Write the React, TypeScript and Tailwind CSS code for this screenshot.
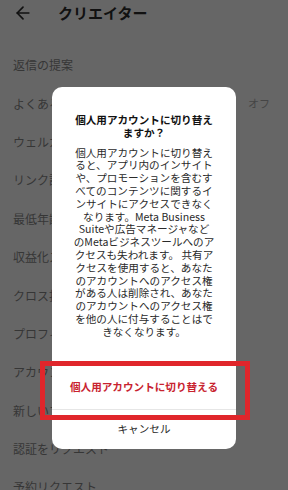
import { ArrowLeft } from "lucide-react";

const menuItems = [
  { label: "返信の提案" },
  { label: "よくある質問", value: "オフ" },
  { label: "ウェルカムメッセージ" },
  { label: "リンク設定" },
  { label: "最低年齢" },
  { label: "収益化ステータス" },
  { label: "クロス投稿" },
  { label: "プロフィールの表示" },
  { label: "アカウントタイプを切り替える" },
  { label: "新しいプロアカウントを追加" },
  { label: "認証をリクエスト" },
  { label: "予約リクエスト" },
];

const bodyLines = [
  "個人用アカウントに切り替え",
  "ると、アプリ内のインサイト",
  "や、プロモーションを含むす",
  "べてのコンテンツに関するイ",
  "ンサイトにアクセスできなく",
  "なります。Meta Business",
  "Suiteや広告マネージャなど",
  "のMetaビジネスツールへのア",
  "クセスも失われます。 共有ア",
  "クセスを使用すると、あなた",
  "のアカウントへのアクセス権",
  "がある人は削除され、あなた",
  "のアカウントへのアクセス権",
  "を他の人に付与することはで",
  "きなくなります。",
];

export default function App() {
  return (
    <div
      className="relative h-[490px] w-full overflow-hidden bg-[#666666]"
      style={{ fontFamily: '"Noto Sans CJK JP", "Noto Sans", sans-serif' }}
    >
      {/* Header */}
      <div className="flex h-[25px] items-center pl-[13px]">
        <ArrowLeft className="h-[20px] w-[20px] text-[#111]" strokeWidth={2} />
        <span className="ml-[25px] text-[15px] font-bold leading-none text-[#111]">
          クリエイター
        </span>
      </div>

      {/* Settings list */}
      <div className="mt-[21px] flex flex-col">
        {menuItems.map((item, index) => (
          <div
            key={index}
            className="flex h-[38.4px] items-center justify-between pl-[13px] pr-[18px]"
          >
            <span className="text-[12px] text-[#363636]">{item.label}</span>
            {item.value && (
              <span className="text-[11px] text-[#454545]">{item.value}</span>
            )}
          </div>
        ))}
      </div>

      {/* Dialog */}
      <div className="absolute left-[52px] top-[87px] flex w-[184px] flex-col overflow-hidden rounded-[10px] bg-white text-center">
        <div className="px-[20px] pt-[26px] pb-[25px]">
          <div className="text-[10.6px] font-bold leading-[13px] text-[#111]">
            個人用アカウントに切り替え
            <br />
            ますか？
          </div>
          <div className="mt-[7.6px] text-[10.6px] leading-[12.8px] text-[#2a2a2a]">
            {bodyLines.map((line, index) => (
              <div key={index} className="whitespace-nowrap">
                {line}
              </div>
            ))}
          </div>
        </div>
        <div className="flex h-[45px] items-center justify-center border-t border-[#e6e6e6] text-[10.6px] font-bold text-[#c8232f]">
          個人用アカウントに切り替える
        </div>
        <div className="flex h-[40px] items-center justify-center border-t border-[#e6e6e6] text-[10.6px] text-[#262626]">
          キャンセル
        </div>
      </div>

      {/* Highlight box */}
      <div className="absolute left-[40px] top-[361px] h-[59px] w-[210px] border-[5px] border-[#e0262b]" />
    </div>
  );
}
